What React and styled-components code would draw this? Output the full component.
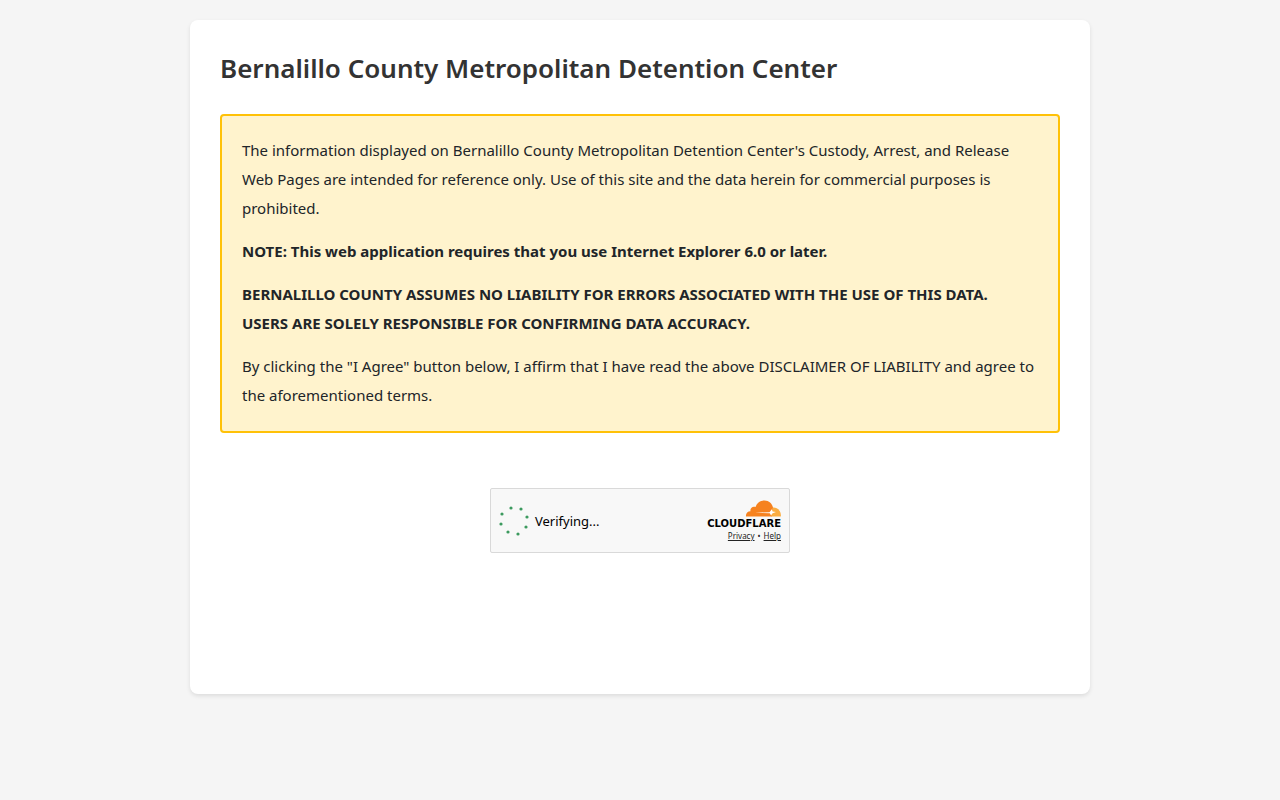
import React from "react";
import styled, { createGlobalStyle } from "styled-components";

const GlobalStyle = createGlobalStyle`
  *, *::before, *::after {
    box-sizing: border-box;
  }

  body {
    margin: 0;
    padding: 20px;
    background: #f5f5f5;
    color: #212529;
    font-family: "Segoe UI", "Noto Sans", sans-serif;
  }
`;

const Card = styled.main`
  max-width: 900px;
  min-height: 674px;
  margin: 0 auto;
  padding: 30px;
  background: #fff;
  border-radius: 8px;
  box-shadow: 0 2px 4px rgba(0, 0, 0, 0.1);
`;

const Title = styled.h1`
  margin: 0 0 28px;
  color: #333;
  font-size: 26px;
  font-weight: 600;
  line-height: 36px;
`;

const Disclaimer = styled.section`
  display: flex;
  flex-direction: column;
  gap: 14px;
  padding: 20px 18px 21px 20px;
  background: #fff3cd;
  border: 2px solid #ffc107;
  border-radius: 4px;
`;

const Paragraph = styled.p`
  margin: 0;
  color: #212529;
  font-size: 15px;
  font-weight: ${({ $strong }) => ($strong ? 700 : 400)};
  line-height: 29px;
`;

const Challenge = styled.div`
  display: flex;
  justify-content: center;
  margin-top: 55px;
`;

const Widget = styled.div`
  display: flex;
  align-items: center;
  justify-content: space-between;
  width: 300px;
  height: 65px;
  padding: 0 8px;
  background: #f8f8f8;
  border: 1px solid #d9d9d9;
  border-radius: 2px;
`;

const Status = styled.div`
  display: flex;
  align-items: center;
  gap: 6px;
  color: #000;
  font-size: 13px;
  line-height: 20px;
`;

const Brand = styled.div`
  display: flex;
  flex-direction: column;
  align-items: flex-end;
  gap: 2px;
`;

const Wordmark = styled.span`
  color: #000;
  font-family: "DejaVu Sans", sans-serif;
  font-size: 10px;
  font-weight: 700;
  line-height: 10px;
`;

const Links = styled.nav`
  display: flex;
  gap: 3px;
  color: #232323;
  font-size: 8px;
  line-height: 10px;
`;

const SmallLink = styled.a`
  color: inherit;
  text-decoration: underline;
`;

const DOTS = [
  [12, 3],
  [22, 4],
  [28, 12],
  [27, 22],
  [19, 29],
  [9, 27],
  [2, 19],
  [3, 9],
];

function Spinner() {
  return (
    <svg width="30" height="32" viewBox="0 0 30 32" aria-hidden="true">
      {DOTS.map(([cx, cy]) => (
        <circle key={`${cx}-${cy}`} cx={cx} cy={cy} r="1.6" fill="#3c9a5f" />
      ))}
    </svg>
  );
}

function Cloud() {
  return (
    <svg width="36" height="17" viewBox="0 0 36 17" aria-hidden="true">
      <path
        d="M1 16.5C0.5 13.6 2.5 11.4 5.5 11.3C4.8 8.3 7.7 5.6 10.5 7.1C12 2.8 15.5 0.4 19.5 0.5C24 0.6 27 3.5 28 7.6L27 16.5Z"
        fill="#f6821f"
      />
      <path
        d="M26 16.5L28 7.5C33 7 36.5 11.7 35.8 16.5Z"
        fill="#fbad41"
      />
      <path
        d="M10 12.6L24.5 12.2L26.8 9.2L27.6 11.5L31 12L27.6 13.2L26 15.5L24.8 13.3Z"
        fill="#fff"
      />
    </svg>
  );
}

export default function App() {
  return (
    <>
      <GlobalStyle />
      <Card>
        <Title>Bernalillo County Metropolitan Detention Center</Title>
        <Disclaimer>
          <Paragraph>
            The information displayed on Bernalillo County Metropolitan
            Detention Center's Custody, Arrest, and Release Web Pages are
            intended for reference only. Use of this site and the data herein
            for commercial purposes is prohibited.
          </Paragraph>
          <Paragraph $strong>
            NOTE: This web application requires that you use Internet Explorer
            6.0 or later.
          </Paragraph>
          <Paragraph $strong>
            BERNALILLO COUNTY ASSUMES NO LIABILITY FOR ERRORS ASSOCIATED WITH
            THE USE OF THIS DATA.
            <br />
            USERS ARE SOLELY RESPONSIBLE FOR CONFIRMING DATA ACCURACY.
          </Paragraph>
          <Paragraph>
            By clicking the "I Agree" button below, I affirm that I have read
            the above DISCLAIMER OF LIABILITY and agree to the aforementioned
            terms.
          </Paragraph>
        </Disclaimer>
        <Challenge>
          <Widget>
            <Status role="status">
              <Spinner />
              Verifying...
            </Status>
            <Brand>
              <Cloud />
              <Wordmark>CLOUDFLARE</Wordmark>
              <Links aria-label="Cloudflare">
                <SmallLink href="#privacy">Privacy</SmallLink>
                <span>•</span>
                <SmallLink href="#help">Help</SmallLink>
              </Links>
            </Brand>
          </Widget>
        </Challenge>
      </Card>
    </>
  );
}
